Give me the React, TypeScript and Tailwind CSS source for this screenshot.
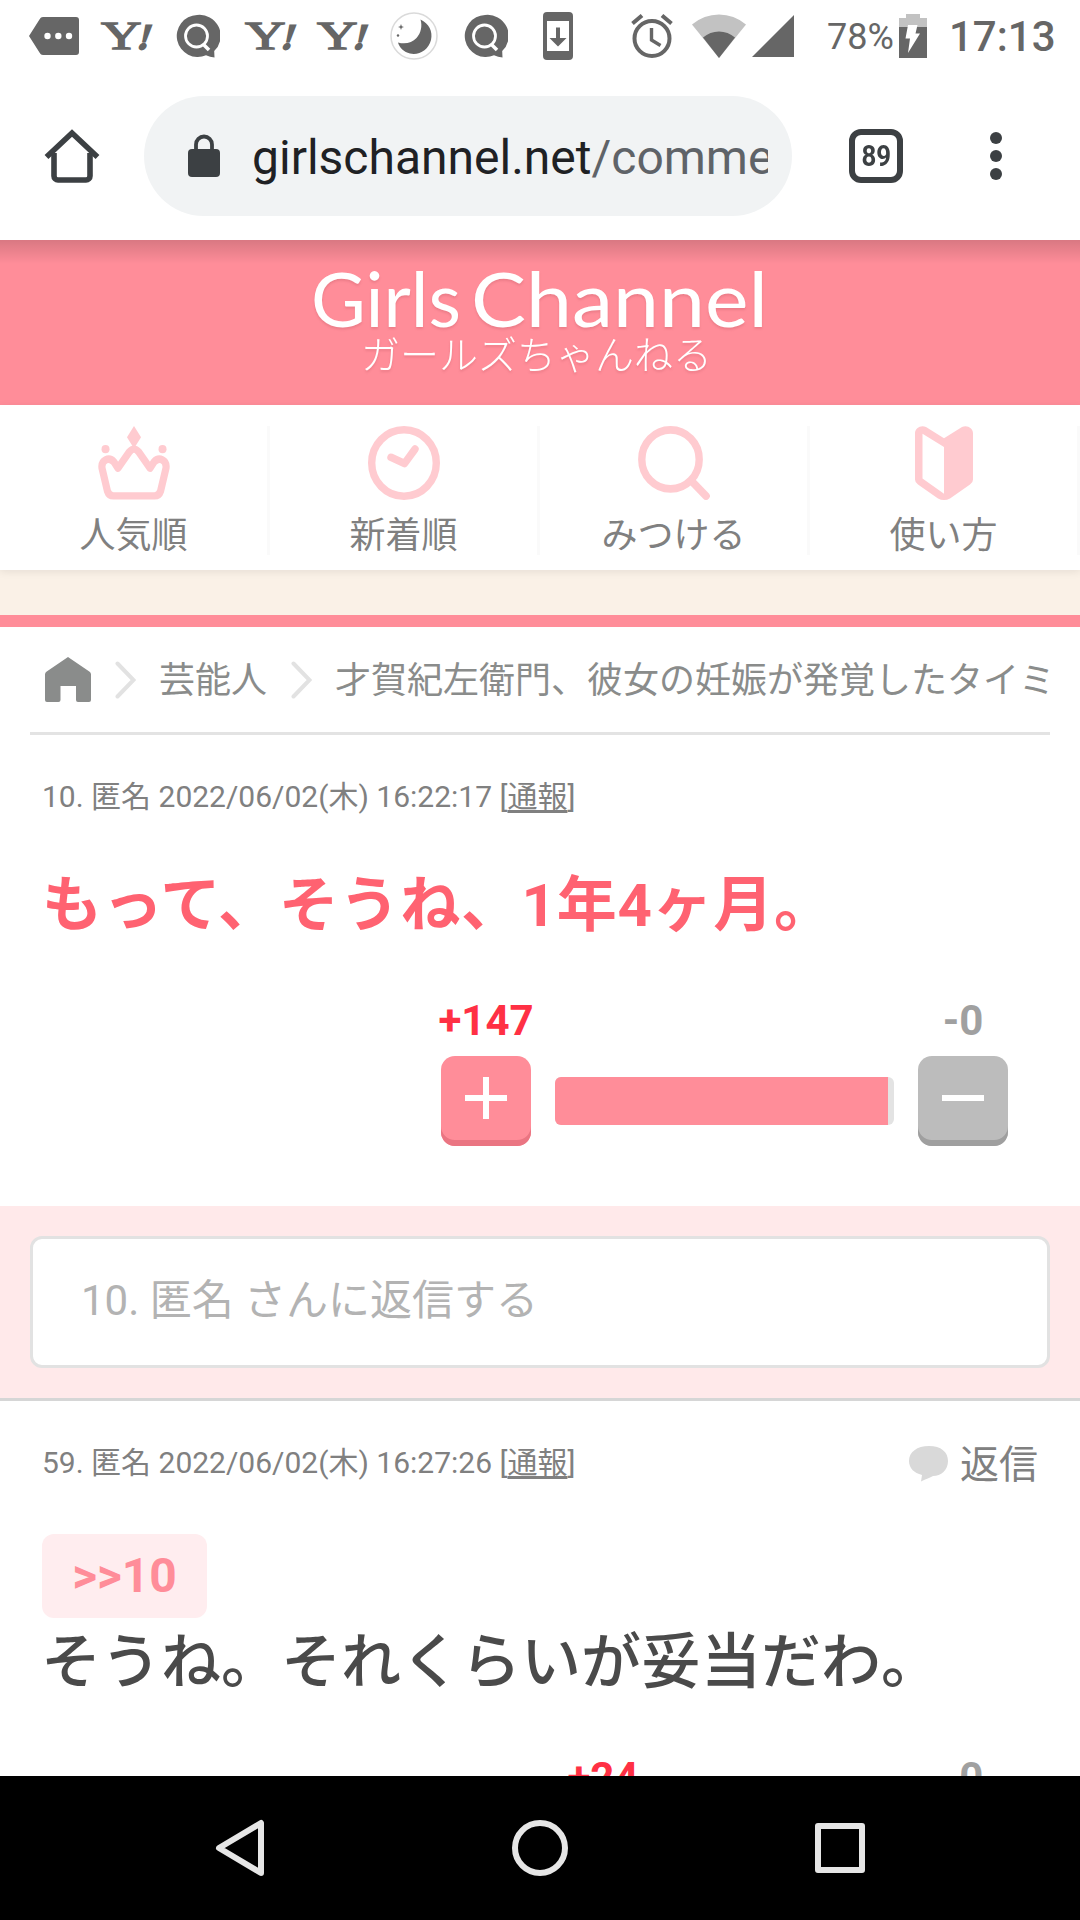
import type { ReactNode } from 'react'

const GREY = '#666666'
const PALE = '#ffcbd0'

/* ---------- status bar icons ---------- */

function TagIcon() {
  return (
    <svg width="50" height="38" viewBox="0 0 50 38">
      <path d="M14 0h33a3 3 0 0 1 3 3v32a3 3 0 0 1-3 3H14c-1.500 0-2.500-.8-3.200-2L0 19 10.800 2C11.500.8 12.500 0 14 0Z" fill={GREY} />
      <circle cx="18.500" cy="19" r="3.200" fill="#fff" />
      <circle cx="29.300" cy="19" r="3.200" fill="#fff" />
      <circle cx="40" cy="19" r="3.200" fill="#fff" />
    </svg>
  )
}

function YahooIcon() {
  return (
    <svg width="52" height="30" viewBox="0 0 52 30" fill={GREY} className="overflow-visible">
      <text
        x="0.700"
        y="28"
        fontSize="39"
        textLength="28"
        lengthAdjust="spacingAndGlyphs"
        transform="scale(1.450 1)"
        className="font-['Liberation_Serif',serif]"
        stroke={GREY}
        strokeWidth="1.300"
      >
        Y
      </text>
      <text
        x="36"
        y="28"
        fontSize="36"
        transform="skewX(-16) translate(8 0)"
        stroke={GREY}
        strokeWidth="1.800"
        className="font-['Liberation_Serif',serif] font-bold"
      >
        !
      </text>
    </svg>
  )
}

function BubbleQIcon() {
  return (
    <svg width="44" height="44" viewBox="1 0 44 44">
      <path d="M22 1a21 21 0 1 0 9 40.300 28 28 0 0 0 8.500 2.200l-.3-6.500A21 21 0 0 0 22 1Z" fill={GREY} />
      <circle cx="21.500" cy="22" r="11" fill="none" stroke="#fff" strokeWidth="2.800" />
      <path d="m28 30 6 6" stroke="#fff" strokeWidth="3.600" />
    </svg>
  )
}

function MoonIcon() {
  return (
    <svg width="48" height="48" viewBox="0 0 48 48">
      <circle cx="24" cy="24" r="23" fill="#fff" stroke="#dadada" strokeWidth="1.500" />
      <path d="M30.500 7.500C39 12 43 19 41 28c-2.500 10-12 15.500-21 13.500C14 40 9.500 36 8 30.500c7 2 14 .5 18.500-4.500C31 21 32.500 14 30.500 7.500Z" fill={GREY} />
      <path d="M11 12l.8 2.200 2.200.8-2.200.8L11 18l-.8-2.200L8 15l2.200-.8Z" fill={GREY} />
      <circle cx="8" cy="23.500" r="1.200" fill={GREY} />
    </svg>
  )
}

function PhoneUpdateIcon() {
  return (
    <svg width="30" height="48" viewBox="0 0 30 48">
      <path fillRule="evenodd" d="M4 0h22a4 4 0 0 1 4 4v40a4 4 0 0 1-4 4H4a4 4 0 0 1-4-4V4a4 4 0 0 1 4-4Zm0 9v30h22V9Z" fill={GREY} />
      <path d="M13 15.500h4V26h6.500L15 34.500 6.500 26H13Z" fill={GREY} />
    </svg>
  )
}

function AlarmIcon() {
  return (
    <svg width="42" height="44" viewBox="0 0 42 44" fill="none" stroke={GREY}>
      <circle cx="21" cy="24.500" r="17.500" strokeWidth="4" />
      <path d="M20.500 14v12l9 5.500" strokeWidth="3.400" />
      <path d="m1.500 9.500 9.500-8M40.500 9.500l-9.500-8" strokeWidth="4" />
    </svg>
  )
}

function WifiIcon() {
  return (
    <svg width="54" height="44" viewBox="0 0 54 44">
      <path d="M27 44 0 10.500Q12 .5 27 .5t27 10Z" fill="#c2c2c2" />
      <path d="M27 44 11 23.500Q18 17.500 27 17.500t16 6Z" fill={GREY} />
    </svg>
  )
}

function BatteryIcon() {
  return (
    <svg width="28" height="44" viewBox="0 0 28 44">
      <path d="M7 0h14v4h7v9.500H0V4h7Z" fill="#c2c2c2" />
      <path d="M0 13h28v31H0Z" fill={GREY} />
      <path d="M9 11h9.500l-2 8.500H21L9 39l2-14.500H6.500Z" fill="#fff" />
    </svg>
  )
}

const notifications: ReactNode[] = [
  <TagIcon />,
  <YahooIcon />,
  <BubbleQIcon />,
  <YahooIcon />,
  <YahooIcon />,
  <MoonIcon />,
  <BubbleQIcon />,
  <PhoneUpdateIcon />,
]

function StatusBar() {
  return (
    <div className="flex h-[72px] items-center pl-[18px] text-[#666666]">
      {notifications.map((icon, i) => (
        <div key={i} className="flex w-[72px] shrink-0 justify-center">
          {icon}
        </div>
      ))}
      <div className="ml-[37px] flex items-center">
        <AlarmIcon />
        <div className="ml-[19px]">
          <WifiIcon />
        </div>
        <svg width="42" height="42" viewBox="0 0 42 42" className="ml-[6px]">
          <path d="M42 0v42H0Z" fill={GREY} />
        </svg>
        <span className="mt-[2px] ml-[33px] w-[67px] text-[36px] leading-[42px] whitespace-nowrap">78%</span>
        <div className="ml-[5px]">
          <BatteryIcon />
        </div>
        <span className="mt-[2px] ml-[22px] text-[42px] leading-[48px] font-medium whitespace-nowrap">17:13</span>
      </div>
    </div>
  )
}

function BrowserBar() {
  return (
    <div className="flex h-[168px] items-center pl-[44px]">
      <svg width="56" height="56" viewBox="0 0 56 56" fill="none" stroke="#3c4043" strokeWidth="5.600" className="shrink-0">
        <path d="M10 25v23a4 4 0 0 0 4 4h28a4 4 0 0 0 4-4V25" />
        <path d="M2.500 29 28 5l25.500 24" />
      </svg>
      <div className="ml-[44px] flex h-[120px] w-[648px] shrink-0 items-center rounded-full bg-[#f1f3f4] pl-[44px]">
        <svg width="32" height="44" viewBox="0 0 32 44" className="shrink-0">
          <rect y="15" width="32" height="28" rx="4" fill="#3c4043" />
          <path d="M8 17v-6.500a8 8 0 0 1 16 0V17" fill="none" stroke="#3c4043" strokeWidth="3.800" />
        </svg>
        <div className="mt-[3px] ml-[32px] w-[516px] overflow-hidden text-[48px] leading-[60px] whitespace-nowrap text-[#202124]">
          girlschannel.net<span className="text-[#5f6368]">/comme</span>
        </div>
      </div>
      <div className="ml-[57px] flex size-[54px] shrink-0 items-center justify-center rounded-[12px] border-[6px] border-[#3c4043] text-[#3c4043]">
        <span className="scale-x-[0.860] text-[30px] leading-none font-bold">89</span>
      </div>
      <div className="ml-[87px] flex flex-col gap-[6px]">
        <i className="size-[12px] rounded-full bg-[#3c4043]" />
        <i className="size-[12px] rounded-full bg-[#3c4043]" />
        <i className="size-[12px] rounded-full bg-[#3c4043]" />
      </div>
    </div>
  )
}

/* ---------- site header ---------- */

function SiteHeader() {
  return (
    <header className="h-[165px] bg-[#ff8d99]">
      <div className="h-[24px] bg-linear-to-b from-black/15 to-transparent" />
      <svg width="1080" height="140" viewBox="0 264 1080 140" fill="#fff" className="block [filter:drop-shadow(0_2px_1px_rgba(160,60,70,0.2))]">
        <g fontSize="75" className="font-['Lato',sans-serif]">
          <text x="311" y="327" textLength="150" lengthAdjust="spacingAndGlyphs">
            Girls
          </text>
          <text x="471" y="327" textLength="297" lengthAdjust="spacingAndGlyphs">
            Channel
          </text>
        </g>
        <text x="361" y="369" fontSize="39" textLength="351" className="font-['Noto_Sans_CJK_JP',sans-serif] font-light">
          ガールズちゃんねる
        </text>
      </svg>
    </header>
  )
}

function CrownIcon() {
  return (
    <svg width="72" height="74" viewBox="0 0 72 72" preserveAspectRatio="none" className="shrink-0">
      <path d="m36 0 7 11-7 11-7-11Z" fill={PALE} />
      <circle cx="7.500" cy="22.500" r="4" fill={PALE} />
      <circle cx="64.500" cy="22.500" r="4" fill={PALE} />
      <path
        d="M20 41l-4-6C11 29.500 3 33 4 41l5.500 22.500q1.500 4.500 6 4.500h41q4.500 0 6-4.500L68 41c1-8-7-11.500-12-6l-4 6-11.500-16q-4.500-5-9 0Z"
        fill="none"
        stroke={PALE}
        strokeWidth="7.200"
        strokeLinejoin="round"
      />
    </svg>
  )
}

function ClockIcon() {
  return (
    <svg width="72" height="74" viewBox="0 0 72 72" preserveAspectRatio="none" fill="none" stroke={PALE} strokeLinecap="round" strokeLinejoin="round" className="shrink-0">
      <circle cx="36" cy="36" r="32.300" strokeWidth="7.400" />
      <path d="m23 30.500 13.500 6L47 22.500" strokeWidth="7.400" />
    </svg>
  )
}

function SearchIcon() {
  return (
    <svg width="72" height="74" viewBox="0 0 72 72" preserveAspectRatio="none" fill="none" stroke={PALE} strokeLinecap="round" className="shrink-0">
      <circle cx="32.500" cy="32.500" r="28.700" strokeWidth="7.400" />
      <path d="m54 54 14 14" strokeWidth="7.600" />
    </svg>
  )
}

function BeginnerIcon() {
  return (
    <svg width="58" height="74" viewBox="0 0 58 72" preserveAspectRatio="none" className="shrink-0">
      <path
        fillRule="evenodd"
        d="M11 1 29 12 47 1c5-2.500 11 1 11 6v45q0 3-3 5L35 70.500q-6 3-12 0L3 57q-3-2-3-5V7c0-5 6-8.500 11-6ZM7.500 7.500V51L29 66V20.500Z"
        fill={PALE}
      />
    </svg>
  )
}

const tabs = [
  { label: '人気順', icon: <CrownIcon /> },
  { label: '新着順', icon: <ClockIcon /> },
  { label: 'みつける', icon: <SearchIcon /> },
  { label: '使い方', icon: <BeginnerIcon /> },
]

function SiteNav() {
  return (
    <nav className="relative flex h-[165px] bg-white pt-[21px] shadow-[0_2px_8px_rgba(0,0,0,0.080)]">
      {tabs.map((t) => (
        <div key={t.label} className="flex h-[129px] w-[270px] flex-col items-center border-r-[3px] border-[#fafafa]">
          {t.icon}
          <span className="mt-[12px] text-[36px] leading-[48px] text-[#808080]">{t.label}</span>
        </div>
      ))}
    </nav>
  )
}

function Chevron() {
  return (
    <svg width="21" height="38" viewBox="0 0 21 38" fill="none" stroke="#e2e2e2" strokeWidth="4" strokeLinecap="round" className="shrink-0">
      <path d="m2.500 2.500 16 16.500-16 16.500" />
    </svg>
  )
}

function Breadcrumb() {
  return (
    <div className="mx-[30px] flex h-[108px] items-center overflow-hidden border-b-[3px] border-[#e3e3e3] pl-[15px] text-[36px] leading-[48px] whitespace-nowrap text-[#8a8c8b]">
      <svg width="46" height="46" viewBox="0 0 46 46" className="shrink-0">
        <path d="M23 0 45 15q1 1 1 2.500V43a2 2 0 0 1-2 2H33a2 2 0 0 1-2-2V29H15.500v14a2 2 0 0 1-2 2H2a2 2 0 0 1-2-2V17.500Q0 16 1 15Z" fill="#8a8c8b" />
      </svg>
      <div className="ml-[24px] flex items-center">
        <Chevron />
        <span className="mt-[3px] ml-[23px]">芸能人</span>
        <div className="ml-[24px]">
          <Chevron />
        </div>
        <span className="mt-[3px] ml-[23px]">才賀紀左衛門、彼女の妊娠が発覚したタイミ</span>
      </div>
    </div>
  )
}

/* ---------- comments ---------- */

function CommentMeta({ no, time }: { no: number; time: string }) {
  return (
    <p className="text-[30px] leading-[42px] whitespace-nowrap text-[#808080]">
      {no}. 匿名 2022/06/02(木) {time} [
      <span className="underline decoration-[3px] underline-offset-[3px]">通報</span>]
    </p>
  )
}

function VoteButton({ minus }: { minus?: boolean }) {
  return (
    <button
      type="button"
      className={
        minus
          ? 'size-[90px] rounded-[14px] bg-[#bcbcbc] shadow-[inset_0_-6px_0_#9f9f9f]'
          : 'size-[90px] rounded-[14px] bg-[#ff8d99] shadow-[inset_0_-6px_0_#ea7582]'
      }
    >
      <svg width="90" height="90" viewBox="0 0 90 90" stroke="#fff" strokeWidth="6">
        <path d={minus ? 'M24 42h42' : 'M24 42h42M45 21v42'} />
      </svg>
    </button>
  )
}

function Votes() {
  return (
    <div className="ml-[441px] flex h-[151px] w-[567px] justify-between">
      <div className="flex w-[90px] flex-col items-center">
        <span className="mb-[10px] text-[42px] leading-[51px] font-bold text-[#ff3044]">+147</span>
        <VoteButton />
      </div>
      <div className="mt-[82px] h-[48px] w-[339px] overflow-hidden rounded-[6px] bg-[#e3e3e3]">
        <div className="h-full w-[333px] bg-[#ff8d99]" />
      </div>
      <div className="flex w-[90px] flex-col items-center">
        <span className="mb-[10px] text-[42px] leading-[51px] font-bold text-[#a0a0a0]">-0</span>
        <VoteButton minus />
      </div>
    </div>
  )
}

function ReplyBox() {
  return (
    <div className="h-[195px] border-b-[3px] border-[#d6d6d6] bg-[#ffe9ea] px-[30px] pt-[30px]">
      <div className="flex h-[132px] items-center rounded-[12px] border-[3px] border-[#e2e2e2] bg-white pb-[2px] pl-[48px] text-[42px] leading-[60px] text-[#b3b3b3]">
        10. 匿名 さんに返信する
      </div>
    </div>
  )
}

function SystemNav() {
  return (
    <div className="flex h-[144px] shrink-0 items-center justify-center bg-black">
      <svg width="650" height="60" viewBox="0 0 650 60" fill="none" stroke="#e6e6e6" strokeWidth="6" strokeLinejoin="round">
        <path d="M46 5v50L4 30Z" />
        <circle cx="325" cy="30" r="25" />
        <rect x="603" y="8" width="44" height="44" />
      </svg>
    </div>
  )
}

export default function App() {
  return (
    <div className="flex h-[1920px] w-[1080px] flex-col overflow-hidden bg-white font-['Roboto','Noto_Sans_CJK_JP',sans-serif]">
      <StatusBar />
      <BrowserBar />
      <div className="h-[1536px] overflow-hidden">
        <SiteHeader />
        <SiteNav />
        <div className="h-[57px] border-b-[12px] border-[#ff8d99] bg-[#faf1e7]" />
        <Breadcrumb />

        <article className="h-[471px] pt-[41px]">
          <div className="pl-[42px]">
            <CommentMeta no={10} time="16:22:17" />
            <p className="mt-[48px] text-[60px] leading-[80px] font-bold tracking-[0.7px] whitespace-nowrap text-[#ff6271]">
              もって、そうね、1年4ヶ月。
            </p>
          </div>
          <div className="mt-[49px]">
            <Votes />
          </div>
        </article>

        <ReplyBox />

        <article className="pt-[41px]">
          <div className="flex items-center justify-between pr-[42px] pl-[42px]">
            <CommentMeta no={59} time="16:27:26" />
            <div className="flex h-[42px] items-center">
              <svg width="40" height="36" viewBox="0 0 40 36" className="mt-[2px]">
                <path d="M20 0C32 0 39 6 39 15S32 30 24 30c-3 1.500-7 3-12 5.500l1-6.500C5 27 0 22 0 15 0 6 8 0 20 0Z" fill="#d9d9d9" />
              </svg>
              <span className="mt-[3px] ml-[11px] text-[39px] leading-[42px] text-[#808080]">返信</span>
            </div>
          </div>
          <div className="mt-[50px] pl-[42px]">
            <a className="block h-[84px] w-[165px] rounded-[12px] bg-[#ffedef] text-center text-[48px] leading-[84px] font-bold text-[#ff8d99]">
              &gt;&gt;10
            </a>
            <p className="mt-[5px] -ml-px text-[60px] leading-[80px] font-medium whitespace-nowrap text-[#4a4a4a]">
              そうね。それくらいが妥当だわ。
            </p>
          </div>
          <div className="mt-[49px] flex h-[51px] justify-between pr-[72px] pl-[558px] text-[42px] leading-[51px] font-bold">
            <span className="w-[90px] text-center text-[#ff3044]">+24</span>
            <span className="w-[90px] text-center text-[#a0a0a0]">-0</span>
          </div>
        </article>
      </div>
      <SystemNav />
    </div>
  )
}
